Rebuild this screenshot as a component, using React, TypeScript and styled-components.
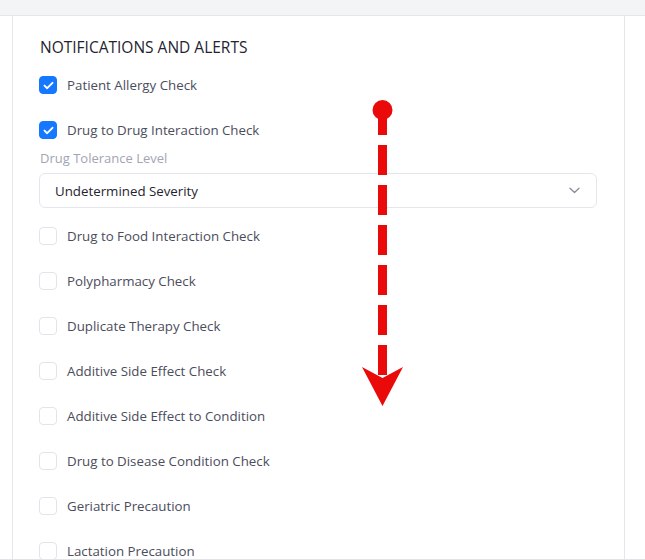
import React from 'react';
import styled, { createGlobalStyle } from 'styled-components';

const GlobalStyle = createGlobalStyle`
  * { box-sizing: border-box; }
  body {
    margin: 0;
    background: #ffffff;
    font-family: "Open Sans", "Noto Sans", Arial, sans-serif;
  }
`;

const Page = styled.div`
  position: relative;
  height: 560px;
  overflow: hidden;
  border-bottom: 1px solid #e2e3e8;
`;

const TopBar = styled.div`
  height: 16px;
  background: #f3f4f6;
  border-bottom: 1px solid #e5e6eb;
`;

const Panel = styled.section`
  margin-left: 12px;
  width: 613px;
  min-height: 600px;
  background: #ffffff;
  border-left: 1px solid #e5e6eb;
  border-right: 1px solid #e5e6eb;
  padding: 21px 27px 0 26px;
`;

const Heading = styled.h2`
  margin: 0 0 19px 1px;
  font-size: 15.5px;
  line-height: 20px;
  font-weight: 500;
  color: #1f2430;
`;

const List = styled.div`
  display: flex;
  flex-direction: column;
`;

const OptionRow = styled.label<{ $space: number }>`
  display: flex;
  align-items: center;
  gap: 10px;
  height: 18px;
  margin-top: ${({ $space }) => $space}px;
  font-size: 13.3px;
  color: #4b4d5c;
  cursor: pointer;
`;

const Box = styled.span<{ $checked: boolean }>`
  flex: none;
  display: flex;
  align-items: center;
  justify-content: center;
  width: 18px;
  height: 18px;
  border-radius: 4px;
  background: ${({ $checked }) => ($checked ? '#1677ff' : '#ffffff')};
  border: 1px solid ${({ $checked }) => ($checked ? '#1677ff' : '#e3e4ea')};
`;

const Field = styled.div`
  display: flex;
  flex-direction: column;
  gap: 6px;
  margin-top: 10px;
`;

const FieldLabel = styled.span`
  margin-left: 1px;
  font-size: 13px;
  line-height: 18px;
  color: #a2a5b3;
`;

const Select = styled.div`
  display: flex;
  align-items: center;
  justify-content: space-between;
  height: 35px;
  padding: 0 16px 0 15px;
  border: 1px solid #e5e6ec;
  border-radius: 6px;
  font-size: 13.3px;
  color: #1f2430;
`;

const Overlay = styled.svg`
  position: absolute;
  left: 0;
  top: 0;
  pointer-events: none;
`;

const Check = () => (
  <svg width="11" height="9" viewBox="0 0 11 9" fill="none">
    <path d="M1.5 4.6 4.2 7.2 9.5 1.8" stroke="#fff" strokeWidth="1.9" strokeLinecap="round" strokeLinejoin="round" />
  </svg>
);

const Chevron = () => (
  <svg width="11" height="7" viewBox="0 0 11 7" fill="none">
    <path d="M1 1.2 5.5 5.5 10 1.2" stroke="#8a8d99" strokeWidth="1.3" strokeLinecap="round" strokeLinejoin="round" />
  </svg>
);

const Option: React.FC<{ label: string; checked?: boolean; space: number }> = ({ label, checked = false, space }) => (
  <OptionRow $space={space}>
    <Box $checked={checked}>{checked && <Check />}</Box>
    {label}
  </OptionRow>
);

const rest = [
  'Polypharmacy Check',
  'Duplicate Therapy Check',
  'Additive Side Effect Check',
  'Additive Side Effect to Condition',
  'Drug to Disease Condition Check',
  'Geriatric Precaution',
  'Lactation Precaution',
];

export default function App() {
  return (
    <>
      <GlobalStyle />
      <Page>
        <TopBar />
        <Panel>
          <Heading>NOTIFICATIONS AND ALERTS</Heading>
          <List>
            <Option label="Patient Allergy Check" checked space={0} />
            <Option label="Drug to Drug Interaction Check" checked space={27} />
            <Field>
              <FieldLabel>Drug Tolerance Level</FieldLabel>
              <Select>
                Undetermined Severity
                <Chevron />
              </Select>
            </Field>
            <Option label="Drug to Food Interaction Check" space={19} />
            {rest.map(label => (
              <Option key={label} label={label} space={27} />
            ))}
          </List>
        </Panel>
        <Overlay width="645" height="560" viewBox="0 0 645 560">
          <line x1="382.5" y1="105" x2="382.5" y2="378" stroke="#ea0a0a" strokeWidth="9" strokeDasharray="30 10" />
          <circle cx="382.5" cy="110" r="10" fill="#ea0a0a" />
          <polygon points="362,367 382.5,378 403,367 382.5,406" fill="#ea0a0a" />
        </Overlay>
      </Page>
    </>
  );
}
